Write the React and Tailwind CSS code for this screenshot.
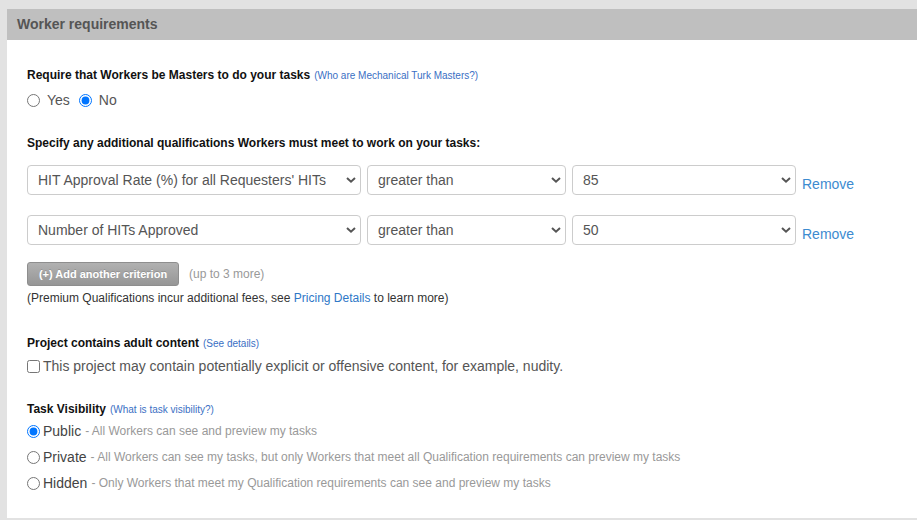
import { useState } from "react";

const font = { fontFamily: '"Liberation Sans", Arial, sans-serif' };

function Chevron() {
  return (
    <svg
      width="10"
      height="7"
      viewBox="0 0 10 7"
      className="pointer-events-none absolute right-[5px] top-1/2 -translate-y-1/2"
    >
      <path d="M1 1.5 L5 5.2 L9 1.5" fill="none" stroke="#555" strokeWidth="2" />
    </svg>
  );
}

function Select({ value, options, width }) {
  return (
    <div className={`relative h-[30px] ${width}`}>
      <select
        defaultValue={value}
        className="h-full w-full appearance-none rounded-[4px] border border-[#cccccc] bg-white pl-[10px] pr-6 text-[14px] text-[#555] outline-none"
      >
        {options.map((o) => (
          <option key={o}>{o}</option>
        ))}
      </select>
      <Chevron />
    </div>
  );
}

function Criterion({ field, value }) {
  return (
    <div className="flex h-[30px] gap-[6px]">
      <Select
        value={field}
        width="w-[334px]"
        options={[
          "HIT Approval Rate (%) for all Requesters' HITs",
          "Number of HITs Approved",
          "Location",
        ]}
      />
      <Select
        value="greater than"
        width="w-[199px]"
        options={["greater than", "less than", "equal to"]}
      />
      <Select value={value} width="w-[224px]" options={["50", "85", "90", "95"]} />
      <a className="self-end pb-[2px] text-[14px] leading-[18px] text-[#3d8bd0]">Remove</a>
    </div>
  );
}

export default function App() {
  const [masters, setMasters] = useState("no");
  const [visibility, setVisibility] = useState("public");

  const visOptions = [
    ["public", "Public", "- All Workers can see and preview my tasks", "mt-[2px]"],
    [
      "private",
      "Private",
      "- All Workers can see my tasks, but only Workers that meet all Qualification requirements can preview my tasks",
      "mt-[6px]",
    ],
    [
      "hidden",
      "Hidden",
      "- Only Workers that meet my Qualification requirements can see and preview my tasks",
      "mt-[6px]",
    ],
  ];

  return (
    <div style={font} className="h-[520px] overflow-hidden bg-[#e2e2e2] pl-[7px] pt-[9px]">
      <div className="h-[509px] bg-white">
        <div className="flex h-[31px] items-center bg-[#bfbfbf] px-[10px] text-[14px] font-bold text-[#555]">
          Worker requirements
        </div>

        <div className="pl-[20px]">
          {/* masters */}
          <div className="mt-[25px] flex h-[20px] items-center text-[12px] font-bold text-[#111]">
            Require that Workers be Masters to do your tasks
            <a className="ml-[4px] text-[10px] font-normal text-[#3a6fc4]">
              (Who are Mechanical Turk Masters?)
            </a>
          </div>
          <div className="mt-[5px] flex h-[20px] items-center text-[14px] text-[#555]">
            <label className="flex items-center">
              <input
                type="radio"
                name="masters"
                checked={masters === "yes"}
                onChange={() => setMasters("yes")}
                className="m-0 h-[13px] w-[13px]"
              />
              <span className="ml-[7px]">Yes</span>
            </label>
            <label className="ml-[9px] flex items-center">
              <input
                type="radio"
                name="masters"
                checked={masters === "no"}
                onChange={() => setMasters("no")}
                className="m-0 h-[13px] w-[13px]"
              />
              <span className="ml-[7px]">No</span>
            </label>
          </div>

          {/* qualifications */}
          <div className="mt-[23px] flex h-[20px] items-center text-[12px] font-bold text-[#111]">
            Specify any additional qualifications Workers must meet to work on your tasks:
          </div>
          <div className="mt-[12px]">
            <Criterion field="HIT Approval Rate (%) for all Requesters' HITs" value="85" />
          </div>
          <div className="mt-[20px]">
            <Criterion field="Number of HITs Approved" value="50" />
          </div>
          <div className="mt-[17px] flex h-[24px] items-center">
            <button className="h-[24px] w-[152px] rounded-[3px] border border-[#8e8e8e] bg-[linear-gradient(#b1b1b1,#969696)] text-[11px] font-bold text-white [text-shadow:0_-1px_0_rgba(0,0,0,0.15)]">
              (+) Add another criterion
            </button>
            <span className="ml-[10px] text-[12px] text-[#999]">(up to 3 more)</span>
          </div>
          <div className="mt-[4px] flex h-[16px] items-center text-[12px] text-[#333]">
            (Premium Qualifications incur additional fees, see&nbsp;
            <a className="text-[#2e78c7]">Pricing Details</a>
            &nbsp;to learn more)
          </div>

          {/* adult content */}
          <div className="mt-[27px] flex h-[20px] items-center text-[12px] font-bold text-[#111]">
            Project contains adult content
            <a className="ml-[4px] text-[10px] font-normal text-[#3a6fc4]">(See details)</a>
          </div>
          <label className="mt-[3px] flex h-[20px] items-center text-[14px] text-[#555]">
            <input type="checkbox" className="m-0 h-[13px] w-[13px]" />
            <span className="ml-[3px]">
              This project may contain potentially explicit or offensive content, for example, nudity.
            </span>
          </label>

          {/* visibility */}
          <div className="mt-[23px] flex h-[20px] items-center text-[12px] font-bold text-[#111]">
            Task Visibility
            <a className="ml-[4px] text-[10px] font-normal text-[#3a6fc4]">
              (What is task visibility?)
            </a>
          </div>
          {visOptions.map(([key, label, desc, mt]) => (
            <label key={key} className={`${mt} flex h-[20px] items-center`}>
              <input
                type="radio"
                name="visibility"
                checked={visibility === key}
                onChange={() => setVisibility(key)}
                className="m-0 h-[13px] w-[13px]"
              />
              <span className="ml-[3px] text-[14px] text-[#444]">{label}</span>
              <span className="ml-[4px] text-[12px] text-[#999]">{desc}</span>
            </label>
          ))}
        </div>
      </div>
    </div>
  );
}
